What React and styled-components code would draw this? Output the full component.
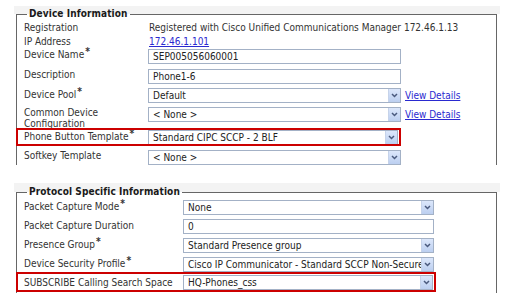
import React from "react";
import styled, { createGlobalStyle } from "styled-components";

const GlobalStyle = createGlobalStyle`
  html, body {
    margin: 0;
    background: #fff;
  }
  body {
    font-family: "DejaVu Sans Condensed", "Liberation Sans", sans-serif;
    font-size: 10px;
    color: #333;
  }
`;

const Page = styled.div`
  width: 510px;
  height: 305px;
  overflow: hidden;
  box-sizing: border-box;
  padding: 6px 0 0 14px;
  display: flex;
  flex-direction: column;
  gap: 18px;
`;

const Panel = styled.div`
  width: 486px;
  background: linear-gradient(#f3f3f3 0 ${(p) => p.$band}px, #fff ${(p) => p.$band}px);
`;

const Fieldset = styled.fieldset`
  margin: ${(p) => p.$band - 7}px 3px 0 2px;
  padding: 0 0 0 10px;
  min-width: 0;
  border: 1px solid #666;
  border-bottom: none;
  height: ${(p) => p.$h}px;
  box-sizing: border-box;
`;

const Legend = styled.legend`
  padding: 0 2px;
  font-weight: bold;
  font-size: 10px;
  letter-spacing: 0.1px;
  line-height: 14px;
  color: #1a1a1a;
`;

const Row = styled.div`
  display: grid;
  grid-template-columns: ${(p) => p.$label}px ${(p) => p.$field}px auto;
  align-items: start;
  justify-content: start;
  box-sizing: border-box;
  margin-left: -11px;
  padding-left: 8px;
  height: ${(p) => p.$h}px;
  ${(p) =>
    p.$hl &&
    `
    width: fit-content;
    padding-right: 3px;
    outline: 2px solid #cc0000;
    outline-offset: -2px;
  `}
`;

const Label = styled.div`
  line-height: ${(p) => (p.$lh ? p.$lh : 13)}px;
  margin-top: ${(p) => p.$top || 0}px;
  white-space: nowrap;
`;

const Star = styled.sup`
  font-weight: bold;
  font-size: 10px;
  line-height: 0;
  vertical-align: 3px;
  margin-left: 1px;
`;

const Value = styled.div`
  line-height: 13px;
  padding-left: 1px;
  white-space: nowrap;
`;

const Link = styled.a`
  color: #2a2ad0;
  text-decoration: underline;
  line-height: 13px;
  padding-left: 1px;
  white-space: nowrap;
  cursor: pointer;
`;

const Box = styled.div`
  margin-top: ${(p) => p.$top || 0}px;
  height: 15px;
  box-sizing: border-box;
  border: 1px solid #a3b1c6;
  background: #fff;
  display: flex;
  align-items: center;
  overflow: hidden;
  color: #222;
`;

const BoxText = styled.span`
  flex: 1;
  min-width: 0;
  padding-left: 4px;
  white-space: nowrap;
  overflow: hidden;
  line-height: 13px;
`;

const DropButton = styled.span`
  flex: none;
  width: 12px;
  height: 13px;
  box-sizing: border-box;
  background: linear-gradient(#dce7fb, #bccff0);
  border-left: 1px solid #c6d3ea;
  display: flex;
  align-items: center;
  justify-content: center;
`;

const DetailLink = styled(Link)`
  margin-left: 3px;
  margin-top: ${(p) => p.$top || 0}px;
`;

function Req({ children }) {
  return (
    <>
      {children}
      <Star>*</Star>
    </>
  );
}

function Select({ value, top }) {
  return (
    <Box $top={top}>
      <BoxText>{value}</BoxText>
      <DropButton>
        <svg width="7" height="5" viewBox="0 0 7 5">
          <path d="M1 1 L3.5 3.5 L6 1" fill="none" stroke="#4a5a7e" strokeWidth="1.5" />
        </svg>
      </DropButton>
    </Box>
  );
}

function TextInput({ value, top }) {
  return (
    <Box $top={top}>
      <BoxText>{value}</BoxText>
    </Box>
  );
}

export default function App() {
  const a = { $label: 124, $field: 253 };
  const b = { $label: 159, $field: 251 };
  return (
    <Page>
      <GlobalStyle />
      <Panel $band={8}>
        <Fieldset $band={8} $h={158}>
          <Legend>Device Information</Legend>
          <Row {...a} $h={14}>
            <Label>Registration</Label>
            <Value>Registered with Cisco Unified Communications Manager 172.46.1.13</Value>
          </Row>
          <Row {...a} $h={13}>
            <Label>IP Address</Label>
            <Link>172.46.1.101</Link>
          </Row>
          <Row {...a} $h={20}>
            <Label>
              <Req>Device Name</Req>
            </Label>
            <TextInput value="SEP005056060001" top={1} />
          </Row>
          <Row {...a} $h={19}>
            <Label>Description</Label>
            <TextInput value="Phone1-6" top={1} />
          </Row>
          <Row {...a} $h={19}>
            <Label $top={1}>
              <Req>Device Pool</Req>
            </Label>
            <Select value="Default" top={1} />
            <DetailLink $top={2}>View Details</DetailLink>
          </Row>
          <Row {...a} $h={22}>
            <Label $lh={11} $top={1}>
              Common Device
              <br />
              Configuration
            </Label>
            <Select value="< None >" top={1} />
            <DetailLink $top={2}>View Details</DetailLink>
          </Row>
          <Row {...a} $field={250} $h={18} $hl>
            <Label $top={2}>
              <Req>Phone Button Template</Req>
            </Label>
            <Select value="Standard CIPC SCCP - 2 BLF" top={2} />
          </Row>
          <Row {...a} $h={19}>
            <Label $top={3}>Softkey Template</Label>
            <Select value="< None >" top={4} />
          </Row>
        </Fieldset>
      </Panel>

      <Panel $band={9}>
        <Fieldset $band={9} $h={108}>
          <Legend>Protocol Specific Information</Legend>
          <Row {...b} $h={19}>
            <Label $top={1}>
              <Req>Packet Capture Mode</Req>
            </Label>
            <Select value="None" top={1} />
          </Row>
          <Row {...b} $h={19}>
            <Label $top={1}>Packet Capture Duration</Label>
            <TextInput value="0" top={1} />
          </Row>
          <Row {...b} $h={19}>
            <Label $top={1}>
              <Req>Presence Group</Req>
            </Label>
            <Select value="Standard Presence group" top={1} />
          </Row>
          <Row {...b} $h={16}>
            <Label $top={1}>
              <Req>Device Security Profile</Req>
            </Label>
            <Select value="Cisco IP Communicator - Standard SCCP Non-Secure Profile" top={1} />
          </Row>
          <Row {...b} $field={250} $h={20} $hl>
            <Label $top={4}>SUBSCRIBE Calling Search Space</Label>
            <Select value="HQ-Phones_css" top={3} />
          </Row>
        </Fieldset>
      </Panel>
    </Page>
  );
}
